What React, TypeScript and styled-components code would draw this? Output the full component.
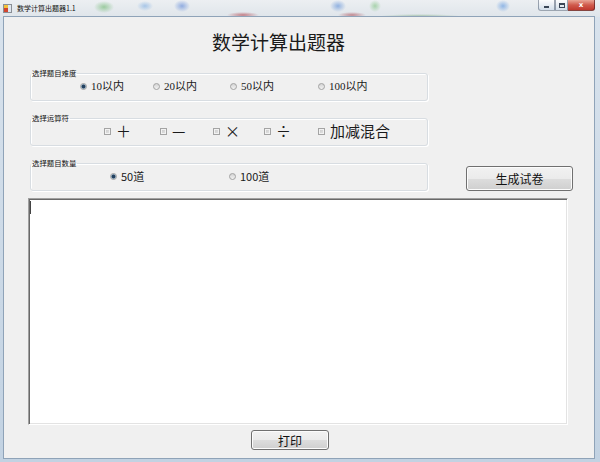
import React from "react";
import styled, { createGlobalStyle } from "styled-components";

const GlobalStyle = createGlobalStyle`
  html, body { margin: 0; padding: 0; background: #ffffff; }
  body { font-family: "Noto Sans CJK SC", "Liberation Sans", sans-serif; }
  * { box-sizing: border-box; }
`;

const Window = styled.div`
  width: 600px;
  height: 462px;
  display: flex;
  flex-direction: column;
  overflow: hidden;
  background: linear-gradient(#d9e3ed, #c2d2e2);
`;

const TitleBar = styled.div`
  height: 17px;
  flex: none;
  display: flex;
  align-items: flex-start;
  padding: 0 5px 0 3px;
  background:
    radial-gradient(ellipse 10px 6px at 104px 7px, rgba(80, 170, 80, 0.5), transparent),
    radial-gradient(ellipse 8px 5px at 145px 6px, rgba(70, 140, 220, 0.4), transparent),
    radial-gradient(ellipse 8px 6px at 182px 6px, rgba(60, 110, 210, 0.5), transparent),
    radial-gradient(ellipse 16px 3px at 243px 15px, rgba(170, 40, 50, 0.55), transparent),
    radial-gradient(ellipse 8px 6px at 338px 6px, rgba(60, 120, 210, 0.5), transparent),
    radial-gradient(ellipse 14px 3px at 352px 15px, rgba(160, 40, 50, 0.5), transparent),
    radial-gradient(ellipse 6px 6px at 375px 6px, rgba(90, 180, 90, 0.45), transparent),
    radial-gradient(ellipse 7px 6px at 503px 6px, rgba(60, 130, 220, 0.5), transparent),
    radial-gradient(ellipse 40px 2px at 420px 16px, rgba(90, 150, 90, 0.4), transparent),
    linear-gradient(#eceff2, #dfe5ea);
`;

const Caption = styled.div`
  display: flex;
  align-items: center;
  gap: 5px;
  height: 16px;
  font-size: 7px;
  color: #111;
  white-space: nowrap;
`;

const CaptionButtons = styled.div`
  margin-left: auto;
  display: flex;
  height: 11px;
`;

const CaptionButton = styled.div<{ $w: number; $close?: boolean }>`
  width: ${(p) => p.$w}px;
  height: 11px;
  display: flex;
  align-items: center;
  justify-content: center;
  border: 1px solid ${(p) => (p.$close ? "rgba(90, 30, 30, 0.7)" : "rgba(80, 95, 115, 0.55)")};
  border-top: none;
  border-left: ${(p) => (p.$close ? "none" : "1px solid rgba(80, 95, 115, 0.55)")};
  border-radius: ${(p) => (p.$close ? "0 0 3px 0" : "0")};
  background: ${(p) =>
    p.$close
      ? "linear-gradient(#e9a696, #d05a4c 50%, #c0392e)"
      : "linear-gradient(rgba(255,255,255,0.85), rgba(205,218,232,0.75))"};
  color: ${(p) => (p.$close ? "#ffffff" : "#33404f")};
  font-family: "DejaVu Sans", sans-serif;
  font-size: 7px;
  font-weight: bold;
  line-height: 1;
  &:first-child {
    border-radius: 0 0 0 3px;
  }
`;

const MinGlyph = styled.span`
  width: 5px;
  height: 2px;
  margin-top: 4px;
  background: #3a4656;
`;

const MaxGlyph = styled.span`
  width: 6px;
  height: 5px;
  border: 1px solid #3a4656;
  border-top-width: 2px;
`;

const Body = styled.div`
  flex: 1;
  display: flex;
  padding: 0 6px 4px 4px;
`;

const Client = styled.div`
  flex: 1;
  display: flex;
  flex-direction: column;
  align-items: flex-start;
  padding: 13px 0 8px 24px;
  background: #f0f0f0;
  box-shadow: 0 0 0 1px #8fa3b8;
`;

const Heading = styled.h1`
  margin: 0 0 0 184px;
  height: 24px;
  font-size: 19px;
  line-height: 24px;
  font-weight: 400;
  color: #1a1a1a;
  letter-spacing: 0;
`;

const Group = styled.fieldset<{ $top: number }>`
  margin: ${(p) => p.$top}px 0 0 2px;
  padding: 0 0 5px;
  width: 398px;
  min-width: 0;
  border: 1px solid #d8dde2;
  border-radius: 3px;
  box-shadow: inset 1px 1px 0 #ffffff, 1px 1px 0 #ffffff;
`;

const Legend = styled.legend`
  margin: 0;
  padding: 0 1px;
  font-size: 7.4px;
  line-height: 8px;
  color: #111;
`;

const OptionRow = styled.div<{ $cols: string; $left: number }>`
  display: grid;
  grid-template-columns: ${(p) => p.$cols};
  align-items: center;
  height: 18px;
  padding-left: ${(p) => p.$left}px;
`;

const Option = styled.label<{ $size: number; $serif?: boolean; $gap: number }>`
  display: flex;
  align-items: center;
  gap: ${(p) => p.$gap}px;
  white-space: nowrap;
  font-size: ${(p) => p.$size}px;
  line-height: 18px;
  color: #1a1a1a;
  font-family: ${(p) =>
    p.$serif
      ? '"Liberation Serif", "Noto Sans CJK SC", serif'
      : '"Noto Sans CJK SC", "Liberation Sans", sans-serif'};
`;

const Radio = styled.span<{ $checked?: boolean }>`
  flex: none;
  width: 7px;
  height: 7px;
  border-radius: 50%;
  border: 1px solid #a2a2a2;
  background: ${(p) =>
    p.$checked
      ? "radial-gradient(circle, #23415f 0 1.4px, #6d8aa6 2px, #dde6ee 2.6px)"
      : "linear-gradient(#d4d4d4, #f2f2f2)"};
`;

const Check = styled.span`
  flex: none;
  width: 7px;
  height: 7px;
  border: 1px solid #a4a4a4;
  background: linear-gradient(135deg, #c9c9c9, #e6e6e6);
  box-shadow: inset 0 0 0 1px #f2f2f2;
`;

const CountRow = styled.div`
  display: flex;
  align-items: flex-start;
  margin-top: 13px;
`;

const PushButton = styled.button<{ $w: number; $h: number }>`
  width: ${(p) => p.$w}px;
  height: ${(p) => p.$h}px;
  padding: 0;
  border: 1px solid #707070;
  border-radius: 3px;
  background: linear-gradient(#f2f2f2 0%, #ebebeb 50%, #dddddd 51%, #cfcfcf 100%);
  box-shadow: inset 0 0 0 1px #fcfcfc;
  font-family: "Noto Sans CJK SC", "Liberation Sans", sans-serif;
  font-size: 12px;
  color: #111;
  display: flex;
  align-items: center;
  justify-content: center;
`;

const GenerateButton = styled(PushButton)`
  margin: 7px 0 0 38px;
`;

const PrintButton = styled(PushButton)`
  margin: 5px 0 0 223px;
`;

const TextBox = styled.div`
  margin-top: 7px;
  width: 540px;
  height: 227px;
  background: #ffffff;
  border-top: 1px solid #a0a0a0;
  border-left: 1px solid #a0a0a0;
  border-right: 1px solid #ffffff;
  border-bottom: 1px solid #ffffff;
  box-shadow: inset 1px 1px 0 #696969, inset -1px -1px 0 #e3e3e3;
  padding: 2px 0 0 1px;
`;

const Caret = styled.span`
  display: block;
  width: 1px;
  height: 13px;
  background: #444;
`;

const AppIcon = () => (
  <svg width="9" height="9" viewBox="0 0 9 9">
    <rect x="0.5" y="0.5" width="8" height="8" fill="#f4f4f4" stroke="#8a8f96" />
    <rect x="1" y="1" width="4" height="3" fill="#f3c13a" />
    <rect x="1" y="4" width="4" height="4" fill="#d2452f" />
    <rect x="5" y="1" width="3" height="7" fill="#dfe6ee" />
  </svg>
);

const levels = [
  { label: "10以内", checked: true },
  { label: "20以内" },
  { label: "50以内" },
  { label: "100以内" },
];

const operators = ["＋", "—", "×", "÷", "加减混合"];

const counts = [{ label: "50道", checked: true }, { label: "100道" }];

export default function App() {
  return (
    <>
      <GlobalStyle />
      <Window>
        <TitleBar>
          <Caption>
            <AppIcon />
            <span>数学计算出题器1.1</span>
          </Caption>
          <CaptionButtons>
            <CaptionButton $w={17}>
              <MinGlyph />
            </CaptionButton>
            <CaptionButton $w={13}>
              <MaxGlyph />
            </CaptionButton>
            <CaptionButton $w={27} $close>
              x
            </CaptionButton>
          </CaptionButtons>
        </TitleBar>
        <Body>
          <Client>
            <Heading>数学计算出题器</Heading>

            <Group $top={15}>
              <Legend>选择题目难度</Legend>
              <OptionRow $cols="73px 77px 88px auto" $left={49}>
                {levels.map((l) => (
                  <Option key={l.label} $size={11} $serif $gap={4}>
                    <Radio $checked={l.checked} />
                    {l.label}
                  </Option>
                ))}
              </OptionRow>
            </Group>

            <Group $top={13}>
              <Legend>选择运算符</Legend>
              <OptionRow $cols="56px 53px 51px 54px auto" $left={73}>
                {operators.map((o) => (
                  <Option key={o} $size={15} $gap={5}>
                    <Check />
                    {o}
                  </Option>
                ))}
              </OptionRow>
            </Group>

            <CountRow>
              <Group $top={0}>
                <Legend>选择题目数量</Legend>
                <OptionRow $cols="119px auto" $left={79}>
                  {counts.map((c) => (
                    <Option key={c.label} $size={11} $gap={4}>
                      <Radio $checked={c.checked} />
                      {c.label}
                    </Option>
                  ))}
                </OptionRow>
              </Group>
              <GenerateButton $w={107} $h={25}>生成试卷</GenerateButton>
            </CountRow>

            <TextBox>
              <Caret />
            </TextBox>

            <PrintButton $w={78} $h={20}>打印</PrintButton>
          </Client>
        </Body>
      </Window>
    </>
  );
}
